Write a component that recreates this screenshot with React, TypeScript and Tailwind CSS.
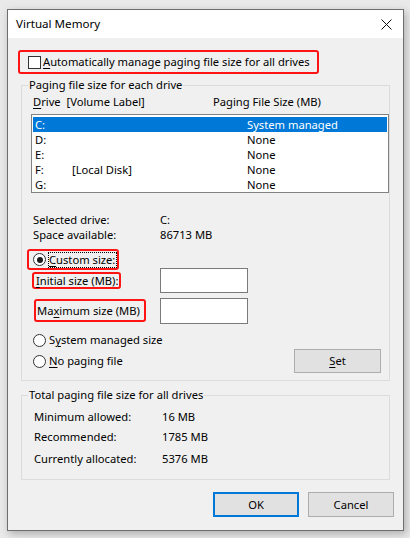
import React from 'react';

const font = { fontFamily: '"Noto Sans", "Open Sans", sans-serif' };

const Radio: React.FC<{ checked?: boolean }> = ({ checked }) => (
  <span className="w-[13px] h-[13px] rounded-full border border-[#333] bg-white flex items-center justify-center shrink-0">
    {checked && <span className="w-[6px] h-[6px] rounded-full bg-[#1a1a1a]" />}
  </span>
);

const drives = [
  { d: 'C:', label: '', size: 'System managed' },
  { d: 'D:', label: '', size: 'None' },
  { d: 'E:', label: '', size: 'None' },
  { d: 'F:', label: '[Local Disk]', size: 'None' },
  { d: 'G:', label: '', size: 'None' },
];

export default function App() {
  return (
    <div
      className="w-[410px] h-[538px] bg-[#e9e9e9] pt-[9px] pl-[7px] text-[11.2px] leading-[16px] text-black overflow-hidden whitespace-nowrap"
      style={font}
    >
      <div className="w-[397px] h-[522px] border border-[#6e6e6e] bg-[#f0f0f0] shadow-[2px_3px_8px_rgba(0,0,0,0.25)] flex flex-col">
        {/* title bar */}
        <div className="h-[28px] bg-white flex items-center justify-between pl-[8px] pr-[11px]">
          <span className="text-[11.6px]">Virtual Memory</span>
          <svg width="11" height="11" viewBox="0 0 11 11">
            <path d="M0.5 0.5 L10.5 10.5 M10.5 0.5 L0.5 10.5" stroke="#111" strokeWidth="1" />
          </svg>
        </div>

        <div className="flex flex-col pl-[10px]">
          <div className="mt-[12px] w-[301px] h-[24px] border-[2px] border-[#ff1414] rounded-[3px] flex items-center pl-[8px] gap-[2px]">
            <span className="w-[13px] h-[13px] border border-[#333] bg-white shrink-0" />
            <span>
              <u className="underline-offset-2">A</u>utomatically manage paging file size for all drives
            </span>
          </div>

          {/* paging file size for each drive */}
          <fieldset className="mt-[3px] ml-[3px] w-[369px] border border-[#dcdcdc] pb-[7px]">
            <legend className="ml-[6px] px-[1px]">Paging file size for each drive</legend>
            <div className="pl-[9px] flex flex-col">
              <div className="mt-[1px] h-[16px] flex">
                <span className="w-[182px] pl-[2px]">
                  <u className="underline-offset-2">D</u>rive&nbsp; [Volume Label]
                </span>
                <span>Paging File Size (MB)</span>
              </div>
              <div className="mt-[4px] w-[358px] h-[79px] border border-[#828282] bg-white pt-[2px]">
                {drives.map((r, i) => (
                  <div
                    key={r.d}
                    className={`mx-[1px] h-[15px] flex items-center pl-[2px] leading-[14px] ${
                      i === 0 ? 'bg-[#0078d7] text-white' : ''
                    }`}
                  >
                    <span className="w-[37px]">{r.d}</span>
                    <span className="w-[175px]">{r.label}</span>
                    <span>{r.size}</span>
                  </div>
                ))}
              </div>

              <div className="mt-[19px] h-[15px] flex pl-[2px]">
                <span className="w-[127px]">Selected drive:</span>
                <span>C:</span>
              </div>
              <div className="h-[16px] flex pl-[2px]">
                <span className="w-[127px]">Space available:</span>
                <span>86713 MB</span>
              </div>

              <div className="mt-[6px] ml-[-4px] w-[92px] h-[21px] border-[2px] border-[#ff1414] rounded-[3px] flex items-center pl-[4px] gap-[2px]">
                <Radio checked />
                <span className="border border-dotted border-black leading-[14px] pr-[1px]">
                  <u className="underline-offset-2">C</u>ustom size:
                </span>
              </div>

              <div className="mt-[-2px] h-[25px] flex items-center">
                <div className="w-[129px] flex">
                  <span className="ml-[1px] h-[17px] border-[2px] border-[#ff1414] rounded-[3px] pl-[2px] pr-[1px] flex items-center leading-[13px]">
                    <span>
                      <u className="underline-offset-2">I</u>nitial size (MB):
                    </span>
                  </span>
                </div>
                <span className="w-[88px] h-[25px] border border-[#7a7a7a] bg-white" />
              </div>

              <div className="mt-[5px] h-[25px] flex items-center">
                <div className="w-[129px] flex">
                  <span className="ml-[3px] w-[112px] h-[23px] border-[2px] border-[#ff1414] rounded-[3px] pl-[1px] flex items-center">
                    <span>
                      Ma<u className="underline-offset-2">x</u>imum size (MB)
                    </span>
                  </span>
                </div>
                <span className="w-[88px] h-[26px] border border-[#7a7a7a] bg-white" />
              </div>

              <div className="mt-[9px] h-[16px] flex items-center pl-[2px] gap-[3px]">
                <Radio />
                <span>
                  S<u className="underline-offset-2">y</u>stem managed size
                </span>
              </div>
              <div className="mt-[1px] h-[24px] flex items-center justify-between pr-[8px]">
                <div className="flex items-center pl-[2px] gap-[3px]">
                  <Radio />
                  <span>
                    <u className="underline-offset-2">N</u>o paging file
                  </span>
                </div>
                <button className="w-[87px] h-[24px] border border-[#adadad] bg-[#e1e1e1] flex items-center justify-center">
                  <span>
                    <u className="underline-offset-2">S</u>et
                  </span>
                </button>
              </div>
            </div>
          </fieldset>

          {/* total paging */}
          <fieldset className="mt-[6px] ml-[3px] w-[369px] border border-[#dcdcdc] pb-[12px]">
            <legend className="ml-[6px] px-[1px]">Total paging file size for all drives</legend>
            <div className="pl-[12px] flex flex-col">
              <div className="mt-[6px] h-[16px] flex">
                <span className="w-[128px]">Minimum allowed:</span>
                <span>16 MB</span>
              </div>
              <div className="mt-[4px] h-[16px] flex">
                <span className="w-[128px]">Recommended:</span>
                <span>1785 MB</span>
              </div>
              <div className="mt-[6px] h-[16px] flex">
                <span className="w-[128px]">Currently allocated:</span>
                <span>5376 MB</span>
              </div>
            </div>
          </fieldset>

          <div className="mt-[12px] flex justify-end gap-[9px] pr-[9px]">
            <button className="w-[86px] h-[25px] border-[2px] border-[#0078d7] bg-[#e1e1e1] flex items-center justify-center">
              OK
            </button>
            <button className="w-[86px] h-[25px] border border-[#adadad] bg-[#e1e1e1] flex items-center justify-center">
              Cancel
            </button>
          </div>
        </div>
      </div>
    </div>
  );
}
